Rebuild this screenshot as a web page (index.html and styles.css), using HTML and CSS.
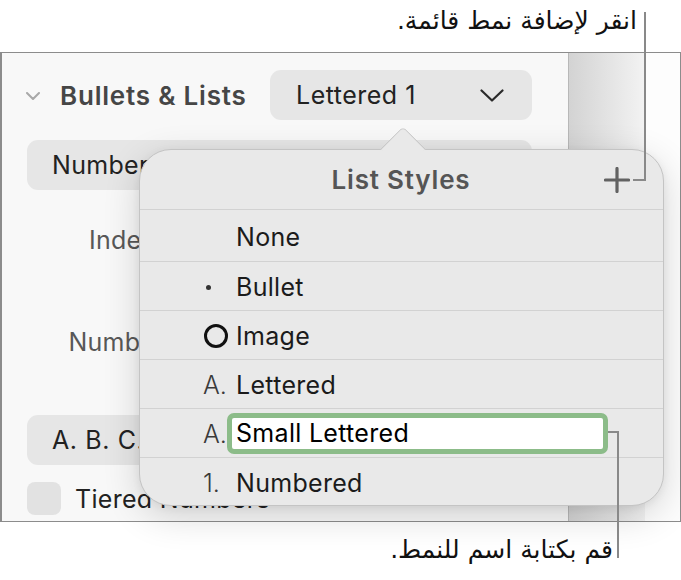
FILE: index.html
```html
<!DOCTYPE html>
<html lang="en">
<head>
<meta charset="utf-8">
<title>List Styles</title>
<link rel="stylesheet" href="styles.css">
</head>
<body>
<div class="page">
  <p class="callout callout-top" dir="rtl" lang="ar">انقر لإضافة نمط قائمة.</p>

  <div class="frame">
    <div class="panel">
      <div class="section-head">
        <svg class="disclosure" width="14" height="8" viewBox="0 0 14 8"><path d="M1 1 L7 7 L13 1" fill="none" stroke="#a9a9a9" stroke-width="2" stroke-linecap="round" stroke-linejoin="round"/></svg>
        <span class="section-title">Bullets &amp; Lists</span>
        <div class="popup-btn">
          <span>Lettered 1</span>
          <svg width="24" height="13" viewBox="0 0 24 13"><path d="M1.5 1.5 L12 11.5 L22.5 1.5" fill="none" stroke="#2a2a2a" stroke-width="2.2" stroke-linecap="round" stroke-linejoin="round"/></svg>
        </div>
      </div>
      <div class="field field-type">Numbered</div>
      <div class="label-row row-indent"><span class="label">Indent</span></div>
      <div class="label-row row-number"><span class="label">Number</span></div>
      <div class="field field-format">A. B. C. D.</div>
      <div class="check-row"><span class="checkbox"></span><span>Tiered Numbers</span></div>
    </div>
    <div class="canvas-edge"></div>
    <div class="canvas"></div>
  </div>

  <p class="callout callout-bottom" dir="rtl" lang="ar">قم بكتابة اسم للنمط.</p>

  <div class="popover">
    <div class="arrow"><span></span></div>
    <div class="pop-head">
      <span></span>
      <span class="pop-title">List Styles</span>
      <svg class="plus" width="26" height="26" viewBox="0 0 26 26"><path d="M13 1.5 V24.5 M1.5 13 H24.5" fill="none" stroke="#626262" stroke-width="3.2" stroke-linecap="round"/></svg>
    </div>
    <div class="item item-first"><span class="marker"></span><span class="name">None</span></div>
    <div class="item"><span class="marker"><span class="dot"></span></span><span class="name">Bullet</span></div>
    <div class="item"><span class="marker"><span class="ring"></span></span><span class="name">Image</span></div>
    <div class="item"><span class="marker mk-text">A.</span><span class="name">Lettered</span></div>
    <div class="item"><span class="marker mk-text mk-narrow">A.</span><span class="name-edit">Small Lettered</span></div>
    <div class="item item-last"><span class="marker mk-text">1.</span><span class="name">Numbered</span></div>
  </div>

  <div class="leader leader-top-v"></div>
  <div class="leader leader-top-h"></div>
  <div class="leader leader-bot-h"></div>
  <div class="leader leader-bot-v"></div>
</div>
</body>
</html>
```

FILE: styles.css
```css
* { box-sizing: border-box; }

html, body {
  margin: 0;
  padding: 0;
  background: #ffffff;
}

body {
  font-family: Inter, "Noto Sans", sans-serif;
  color: #1b1b1b;
}

.page {
  position: relative;
  width: 681px;
  height: 580px;
  overflow: hidden;
}

.callout {
  margin: 0;
  font-family: "DejaVu Sans", sans-serif;
  font-size: 25px;
  color: #111;
  text-align: right;
}

.callout-top {
  height: 52px;
  line-height: 42px;
  padding-right: 44px;
}

.callout-bottom {
  height: 58px;
  line-height: 32px;
  padding-top: 12px;
  padding-right: 68px;
}

.frame {
  display: flex;
  width: 681px;
  height: 470px;
  border-top: 1px solid #8c8c8c;
  border-bottom: 1px solid #8c8c8c;
  border-left: 2px solid #8c8c8c;
  border-right: 1px solid #8c8c8c;
}

.panel {
  width: 566px;
  background: #f8f8f8;
  padding: 17px 36px 0 25px;
  display: flex;
  flex-direction: column;
  font-size: 25px;
  letter-spacing: 0.3px;
}

.canvas-edge {
  width: 77px;
  border-left: 1px solid #b8b8b8;
  background: linear-gradient(to right, #d3d3d3, #f3f3f3);
}

.canvas {
  flex: 1;
  background: #fdfdfd;
}

.section-head {
  display: flex;
  align-items: center;
  height: 50px;
}

.disclosure {
  margin-left: -1px;
  margin-top: 2px;
}

.section-title {
  margin-left: 20px;
  font-weight: 600;
  font-size: 26px;
  letter-spacing: 0.8px;
  color: #464646;
}

.popup-btn {
  margin-left: auto;
  width: 262px;
  height: 50px;
  border-radius: 11px;
  background: #e6e6e6;
  display: flex;
  align-items: center;
  justify-content: space-between;
  padding: 0 28px 0 26px;
  color: #222;
  letter-spacing: 0.5px;
}

.field {
  height: 50px;
  border-radius: 11px;
  background: #e6e6e6;
  display: flex;
  align-items: center;
  padding-left: 25px;
  color: #222;
}

.field-type { margin-top: 20px; }
.field-format { margin-top: 48px; letter-spacing: 0.6px; }

.label-row {
  height: 50px;
  display: flex;
  align-items: center;
}

.row-indent { margin-top: 25px; }
.row-number { margin-top: 52px; }

.label {
  width: 138px;
  text-align: right;
  color: #585858;
}

.check-row {
  margin-top: 17px;
  height: 33px;
  display: flex;
  align-items: center;
  gap: 14px;
  color: #222;
}

.checkbox {
  width: 34px;
  height: 33px;
  border-radius: 8px;
  background: #e2e2e2;
}

/* Popover */
.popover {
  position: absolute;
  left: 139px;
  top: 149px;
  width: 525px;
  height: 357px;
  background: #e9e9e9;
  border: 1px solid #c4c4c4;
  border-radius: 32px;
  box-shadow: 0 10px 36px rgba(0, 0, 0, 0.16), 0 2px 8px rgba(0, 0, 0, 0.06);
  display: flex;
  flex-direction: column;
  font-size: 25px;
  letter-spacing: 0.3px;
}

.arrow {
  position: absolute;
  left: 240px;
  top: -24px;
  width: 46px;
  height: 25px;
  overflow: hidden;
}

.arrow span {
  position: absolute;
  left: 7px;
  top: 7px;
  width: 32px;
  height: 32px;
  background: #e9e9e9;
  border-top: 1px solid #c4c4c4;
  border-left: 1px solid #c4c4c4;
  border-top-left-radius: 5px;
  transform: rotate(45deg);
}

.pop-head {
  height: 59px;
  display: grid;
  grid-template-columns: 1fr auto 1fr;
  align-items: center;
  padding-right: 33px;
}

.pop-title {
  font-weight: 600;
  font-size: 26px;
  letter-spacing: 0.8px;
  color: #555;
  position: relative;
  left: 16px;
}

.plus {
  justify-self: end;
}

.item {
  display: flex;
  align-items: center;
  height: 49px;
  border-top: 1px solid #d2d2d2;
  padding-left: 63px;
  padding-top: 2px;
}

.item-first { height: 52px; }
.item-last { flex: 1; }

.marker {
  width: 33px;
  display: flex;
  align-items: center;
  color: #3a3a3a;
  font-weight: 300;
  letter-spacing: 0;
}

.mk-narrow { width: 24px; }

.dot {
  width: 5px;
  height: 5px;
  border-radius: 50%;
  background: #333;
  margin-left: 3px;
}

.ring {
  width: 24px;
  height: 24px;
  border-radius: 50%;
  border: 3.5px solid #111;
  margin-left: 1px;
}

.name {
  color: #1b1b1b;
}

.name-edit {
  width: 381px;
  height: 41px;
  margin-top: -2px;
  border: 5px solid #8cbc89;
  border-radius: 7px;
  background: #fff;
  padding-left: 4px;
  display: flex;
  align-items: center;
  color: #000;
}

/* Leader lines of the callouts */
.leader {
  position: absolute;
  background: #898989;
}

.leader-top-v { left: 644px; top: 12px; width: 2px; height: 169px; }
.leader-top-h { left: 633px; top: 179px; width: 13px; height: 2px; }
.leader-bot-h { left: 608px; top: 431px; width: 11px; height: 2px; }
.leader-bot-v { left: 617px; top: 431px; width: 2px; height: 127px; }
```
